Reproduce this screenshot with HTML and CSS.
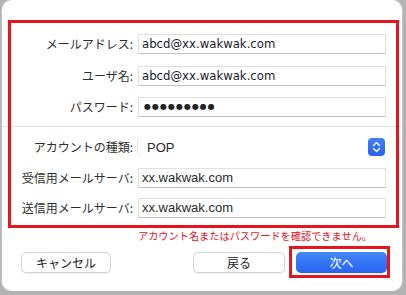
FILE: index.html
```html
<!DOCTYPE html>
<html lang="ja">
<head>
  <meta charset="UTF-8">
  <title>アカウントの追加</title>
  <link rel="stylesheet" href="styles.css">
</head>
<body>

  <div class="window">
    <div class="fields">
      <div class="grid grid-top">
        <label class="label">メールアドレス:</label>
        <div class="input">abcd@xx.wakwak.com</div>
        <label class="label">ユーザ名:</label>
        <div class="input">abcd@xx.wakwak.com</div>
        <label class="label">パスワード:</label>
        <div class="input dots">●●●●●●●●●</div>
      </div>

      <hr class="sep">

      <div class="grid grid-bottom">
        <label class="label">アカウントの種類:</label>
        <div class="popup">
          <span>POP</span>
          <span class="stepper">
            <svg width="9" height="12" viewBox="0 0 9 12">
              <path d="M1.5 4.5 L4.5 1.5 L7.5 4.5" fill="none" stroke="#fff" stroke-width="1.4" stroke-linecap="round" stroke-linejoin="round"/>
              <path d="M1.5 7.5 L4.5 10.5 L7.5 7.5" fill="none" stroke="#fff" stroke-width="1.4" stroke-linecap="round" stroke-linejoin="round"/>
            </svg>
          </span>
        </div>
        <label class="label">受信用メールサーバ:</label>
        <div class="input plain">xx.wakwak.com</div>
        <label class="label">送信用メールサーバ:</label>
        <div class="input plain">xx.wakwak.com</div>
      </div>
    </div>

    <p class="error">アカウント名またはパスワードを確認できません。</p>

    <div class="buttons">
      <button class="btn">キャンセル</button>
      <span class="spacer"></span>
      <button class="btn">戻る</button>
      <span class="mark-btn"><button class="btn primary">次へ</button></span>
    </div>

    <div class="mark"></div>
  </div>

</body>
</html>
```

FILE: styles.css
```css
body {
  margin: 0;
  padding: 0;
  background: #b3b3b3;
  font-family: "Noto Sans CJK JP", "DejaVu Sans", sans-serif;
  color: #2b2b2b;
}
.window {
  position: relative;
  margin-left: 2px;
  width: 400px;
  height: 291px;
  background: #ffffff;
  border-radius: 10px;
  box-shadow: 0 0 0 1px #c4c4c4;
  box-sizing: border-box;
}
.fields {
  padding-top: 34px;
}
.grid {
  display: grid;
  grid-template-columns: 131px 248px;
  column-gap: 5px;
  grid-auto-rows: 20px;
  align-items: center;
}
.grid-top {
  row-gap: 11.5px;
}
.grid-bottom {
  row-gap: 10.5px;
}
.label {
  text-align: right;
  font-size: 12px;
  line-height: 20px;
  color: #2f2f2f;
  white-space: nowrap;
}
.input {
  height: 20px;
  box-sizing: border-box;
  border: 1px solid #e0e0e0;
  border-bottom-color: #c2c2c2;
  background: #fff;
  padding-left: 3px;
  font-family: "DejaVu Sans", sans-serif;
  font-size: 11.7px;
  line-height: 18px;
  color: #1c1c2c;
  white-space: nowrap;
  overflow: hidden;
}
.input.dots {
  font-size: 8px;
  letter-spacing: 1px;
  color: #222;
  padding-left: 5px;
}
.input.plain {
  font-family: "Liberation Sans", sans-serif;
  font-size: 13px;
  color: #2a2a2a;
}
.sep {
  margin: 9px 0 10px;
  border: none;
  height: 1px;
  background: #e3e3e3;
}
.popup {
  height: 20px;
  box-sizing: border-box;
  display: flex;
  align-items: center;
  justify-content: space-between;
  padding-left: 9px;
  padding-right: 1px;
  border-radius: 5px;
  background: #fff;
  box-shadow: -1px 0 0 0 #e2e2e2;
  font-family: "Liberation Sans", sans-serif;
  font-size: 13px;
  color: #2a2a2a;
}
.stepper {
  width: 17px;
  height: 18px;
  border-radius: 4px;
  background: linear-gradient(#3f82f7, #2a62f1);
  display: flex;
  align-items: center;
  justify-content: center;
}
.error {
  margin: 11px 0 0 136px;
  font-size: 10.2px;
  line-height: 14px;
  color: #e8101e;
  white-space: nowrap;
}
.buttons {
  display: flex;
  align-items: flex-start;
  margin-top: 3px;
  padding-left: 19px;
}
.spacer {
  width: 82px;
}
.btn {
  margin-top: 6px;
  width: 90px;
  height: 21px;
  padding: 0;
  border: 1px solid #d6d6d6;
  border-radius: 5px;
  background: #fff;
  box-shadow: 0 1px 1px rgba(0, 0, 0, 0.08);
  font-family: "Noto Sans CJK JP", sans-serif;
  font-size: 12px;
  color: #222;
}
.buttons .btn:nth-of-type(2) {
  width: 92px;
}
.mark-btn {
  margin-left: 4px;
  border: 3px solid #e6141f;
  padding: 3px 0 2px 4px;
}
.btn.primary {
  margin-top: 0;
  width: 91px;
  display: block;
  border: none;
  background: linear-gradient(#4388f8, #2862f2);
  color: #fff;
}
.mark {
  position: absolute;
  left: 6px;
  top: 20px;
  width: 391px;
  height: 208px;
  border: 3px solid #e6141f;
  box-sizing: border-box;
  pointer-events: none;
}
```
